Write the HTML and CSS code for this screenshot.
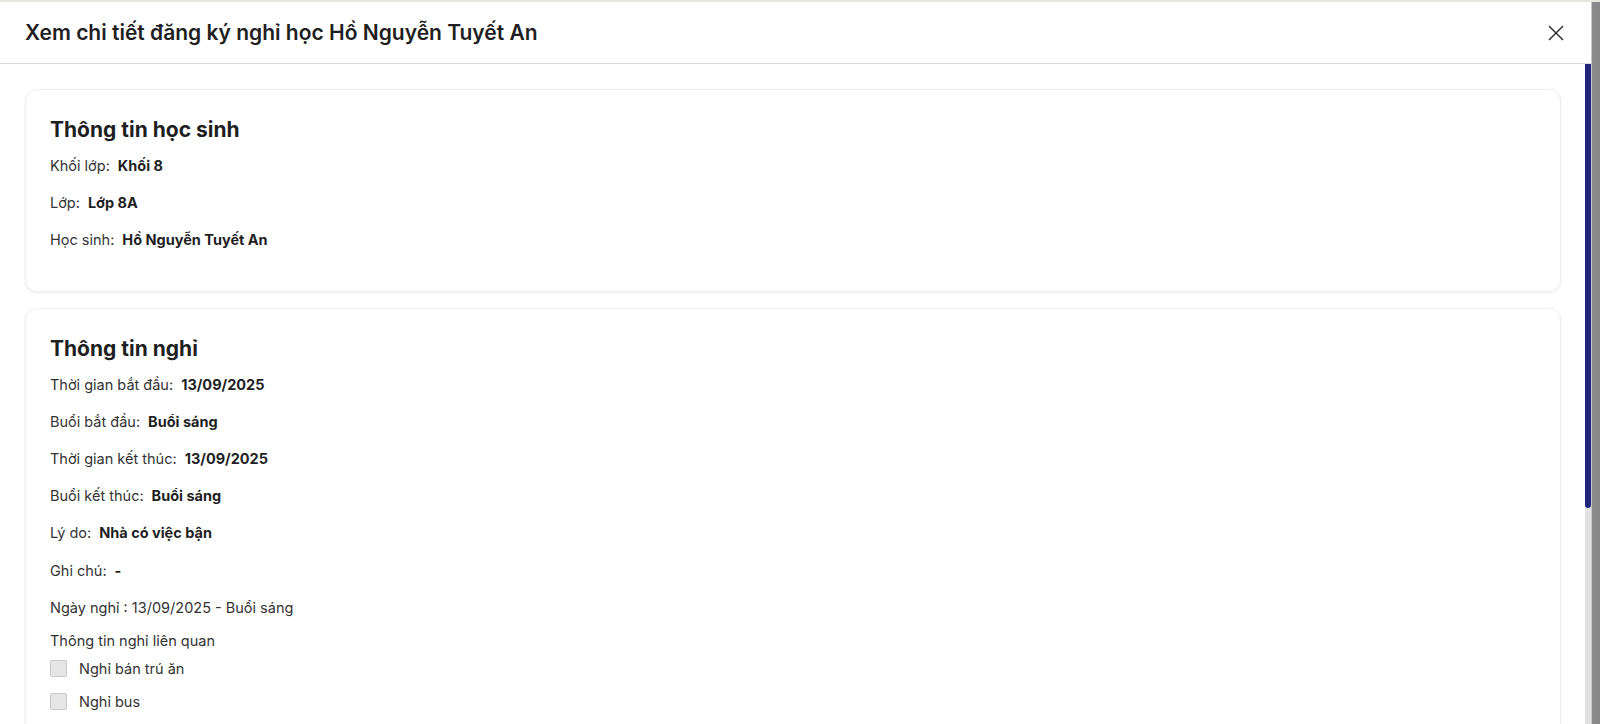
FILE: index.html
```html
<!DOCTYPE html>
<html lang="vi">
<head>
<meta charset="utf-8">
<title>Xem chi tiết đăng ký nghỉ học</title>
<link rel="stylesheet" href="styles.css">
</head>
<body>
<div class="page">
  <div class="modal">
    <div class="modal-header">
      <h1 class="modal-title">Xem chi tiết đăng ký nghỉ học Hồ Nguyễn Tuyết An</h1>
      <button class="close-btn" aria-label="Đóng">
        <svg width="16" height="16" viewBox="0 0 16 16"><path d="M1 1 L15 15 M15 1 L1 15" stroke="#333" stroke-width="1.5" fill="none"/></svg>
      </button>
    </div>
    <div class="modal-main">
      <div class="modal-body">
        <section class="card">
          <h2 class="card-title">Thông tin học sinh</h2>
          <div class="row"><span class="label">Khối lớp:</span><span class="value">Khối 8</span></div>
          <div class="row"><span class="label">Lớp:</span><span class="value">Lớp 8A</span></div>
          <div class="row"><span class="label">Học sinh:</span><span class="value">Hồ Nguyễn Tuyết An</span></div>
        </section>
        <section class="card">
          <h2 class="card-title">Thông tin nghỉ</h2>
          <div class="row"><span class="label">Thời gian bắt đầu:</span><span class="value">13/09/2025</span></div>
          <div class="row"><span class="label">Buổi bắt đầu:</span><span class="value">Buổi sáng</span></div>
          <div class="row"><span class="label">Thời gian kết thúc:</span><span class="value">13/09/2025</span></div>
          <div class="row"><span class="label">Buổi kết thúc:</span><span class="value">Buổi sáng</span></div>
          <div class="row"><span class="label">Lý do:</span><span class="value">Nhà có việc bận</span></div>
          <div class="row"><span class="label">Ghi chú:</span><span class="value">-</span></div>
          <div class="plain">Ngày nghỉ : 13/09/2025 - Buổi sáng</div>
          <div class="sub">Thông tin nghỉ liên quan</div>
          <label class="check"><span class="box"></span>Nghỉ bán trú ăn</label>
          <label class="check"><span class="box"></span>Nghỉ bus</label>
        </section>
      </div>
      <div class="scrollbar"><div class="thumb"></div></div>
    </div>
  </div>
  <div class="outer-bar"></div>
</div>
</body>
</html>
```

FILE: styles.css
```css
* { box-sizing: border-box; }
html, body {
  margin: 0;
  padding: 0;
  height: 100%;
  overflow: hidden;
}
body {
  font-family: Inter, "Noto Sans", Arial, sans-serif;
  color: #222;
  background: #fff;
}
.page {
  display: flex;
  height: 724px;
  border-top: 2px solid #e4e6df;
}
.modal {
  flex: 1;
  display: flex;
  flex-direction: column;
  min-width: 0;
  background: #fff;
}
.outer-bar {
  width: 9px;
  background: linear-gradient(to right, #c8c8c8 0, #c8c8c8 1px, #8c8c8c 1px, #888 100%);
}
.modal-header {
  height: 62px;
  flex: none;
  display: flex;
  align-items: center;
  justify-content: space-between;
  padding: 0 26px 0 25px;
  border-bottom: 1px solid #dcdcdc;
}
.modal-title {
  margin: 0;
  font-size: 21px;
  font-weight: 600;
  color: #1f1f1f;
}
.close-btn {
  border: none;
  background: none;
  padding: 0;
  width: 18px;
  height: 18px;
  display: flex;
  align-items: center;
  justify-content: center;
  cursor: pointer;
}
.modal-main {
  flex: 1;
  display: flex;
  min-height: 0;
}
.modal-body {
  flex: 1;
  overflow: hidden;
  padding: 25px 24px 25px 25px;
  display: flex;
  flex-direction: column;
  gap: 16px;
}
.scrollbar {
  width: 6px;
  flex: none;
  background: #e2e2e2;
}
.thumb {
  height: 444px;
  background: #1f267a;
  border-radius: 0 0 3px 3px;
}
.card {
  flex: none;
  background: #fff;
  border: 1px solid #f0f0f0;
  border-radius: 12px;
  box-shadow: 0 1px 3px rgba(0,0,0,0.08);
  padding: 26px 24px 24px 24px;
  display: flex;
  flex-direction: column;
}
.card-title {
  margin: 0 0 11px 0;
  font-size: 21px;
  font-weight: 700;
  color: #1f1f1f;
  line-height: 28px;
}
.row {
  font-size: 14.5px;
  line-height: 22px;
  margin-bottom: 15.2px;
  display: flex;
  gap: 8px;
}
.label { color: #333; }
.value { font-weight: 700; color: #1f1f1f; }
.plain {
  font-size: 14.5px;
  line-height: 22px;
  color: #333;
  margin-bottom: 11px;
}
.sub {
  font-size: 14.5px;
  line-height: 22px;
  color: #333;
  margin-bottom: 6px;
}
.check {
  display: flex;
  align-items: center;
  gap: 12px;
  font-size: 14.5px;
  line-height: 22px;
  color: #333;
  margin-bottom: 11px;
}
.box {
  width: 17px;
  height: 17px;
  background: #e6e6e6;
  border: 1px solid #c9c9c9;
  border-radius: 2px;
}
```
